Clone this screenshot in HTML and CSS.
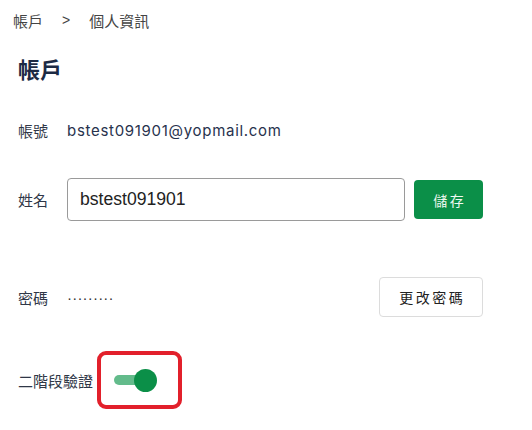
FILE: index.html
```html
<!DOCTYPE html>
<html lang="zh-Hant">
<head>
<meta charset="utf-8">
<title>帳戶</title>
<link rel="stylesheet" href="styles.css">
</head>
<body>
<div class="page">
  <nav class="crumbs">
    <span>帳戶</span>
    <span class="sep">&gt;</span>
    <span>個人資訊</span>
  </nav>
  <h1 class="title">帳戶</h1>

  <div class="row row-account">
    <span class="label">帳號</span>
    <span class="email">bstest091901@yopmail.com</span>
  </div>

  <div class="row row-name">
    <span class="label">姓名</span>
    <input class="name-input" type="text" value="bstest091901">
    <button class="btn btn-primary">儲存</button>
  </div>

  <div class="row row-password">
    <span class="label">密碼</span>
    <span class="dots">·········</span>
    <span class="spacer"></span>
    <button class="btn btn-outline">更改密碼</button>
  </div>

  <div class="row row-2fa">
    <span class="label label-wide">二階段驗證</span>
    <div class="highlight">
      <div class="switch">
        <span class="track"></span>
        <span class="knob"></span>
      </div>
    </div>
  </div>
</div>
</body>
</html>
```

FILE: styles.css
```css
* { box-sizing: border-box; }
html, body { margin: 0; padding: 0; background: #ffffff; }
body {
  font-family: "Noto Sans CJK TC", "Noto Sans", sans-serif;
  color: #2d3443;
}
.page {
  width: 483px;
  padding-left: 18px;
  display: flex;
  flex-direction: column;
}
.crumbs {
  height: 40px;
  margin-left: -5px;
  display: flex;
  align-items: center;
  gap: 19px;
  font-size: 15px;
  color: #444;
}
.crumbs .sep {
  font-family: "Liberation Sans", sans-serif;
  font-size: 14px;
}
.title {
  margin: 8px 0 0;
  height: 40px;
  line-height: 40px;
  font-size: 22px;
  font-weight: 700;
  color: #1c2a44;
}
.row {
  display: flex;
  align-items: center;
}
.label {
  width: 49px;
  flex: none;
  font-size: 15px;
  color: #2f3747;
}
.label-wide { width: auto; margin-right: 4px; }
.row-account { margin-top: 22px; height: 40px; }
.email {
  font-family: "Inter", sans-serif;
  font-size: 15px;
  color: #27324d;
  letter-spacing: 0.7px;
}
.row-name { margin-top: 28px; height: 43px; gap: 9px; }
.row-name .label { margin-right: -9px; }
.name-input {
  flex: 1;
  height: 43px;
  border: 1px solid #9a9a9a;
  border-radius: 4px;
  padding: 0 12px;
  font-family: "Liberation Sans", Arial, sans-serif;
  font-size: 17.6px;
  color: #222;
  background: #fff;
  outline: none;
}
.btn {
  font-family: "Noto Sans CJK TC", sans-serif;
  font-size: 14px;
  letter-spacing: 2.5px;
  padding: 0 0 0 2.5px;
  border-radius: 4px;
  cursor: pointer;
}
.btn-primary {
  width: 69px;
  height: 39px;
  background: #0b8f48;
  border: none;
  color: #eef8f1;
}
.row-password { margin-top: 56px; height: 40px; }
.dots {
  font-family: "Liberation Sans", sans-serif;
  font-size: 15px;
  letter-spacing: 0.2px;
  color: #333;
}
.spacer { flex: 1; }
.btn-outline {
  width: 104px;
  height: 40px;
  background: #fff;
  border: 1px solid #dcdcdc;
  color: #222;
}
.row-2fa { margin-top: 34px; height: 58px; }
.highlight {
  width: 85px;
  height: 58px;
  border: 4px solid #e2202b;
  border-radius: 9px;
  display: flex;
  align-items: center;
  padding-left: 13px;
}
.switch {
  position: relative;
  width: 43px;
  height: 23px;
  display: flex;
  align-items: center;
}
.track {
  width: 38px;
  height: 10px;
  border-radius: 5px;
  background: #63bb8b;
}
.knob {
  position: absolute;
  left: 20px;
  top: 0;
  width: 23px;
  height: 23px;
  border-radius: 50%;
  background: #0b8f48;
}
```
